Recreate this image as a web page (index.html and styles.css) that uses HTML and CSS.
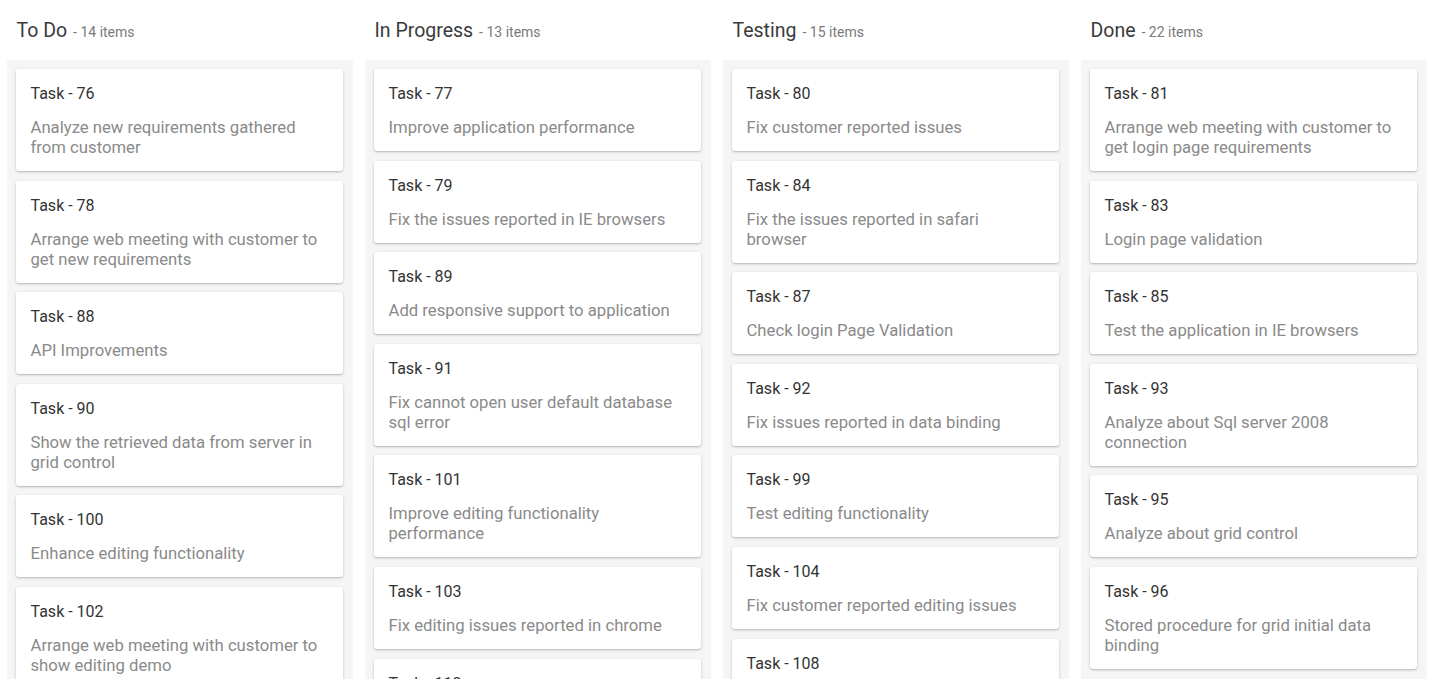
FILE: index.html
```html
<!DOCTYPE html>
<html lang="en">
<head>
<meta charset="utf-8">
<title>Kanban</title>
<link rel="stylesheet" href="styles.css">
</head>
<body>
<div class="board">
  <section class="column">
    <header class="col-head"><span class="col-title">To Do</span><span class="col-count">- 14 items</span></header>
    <div class="col-body">
      <div class="card"><div class="card-title">Task - 76</div><div class="card-desc">Analyze new requirements gathered from customer</div></div>
      <div class="card"><div class="card-title">Task - 78</div><div class="card-desc">Arrange web meeting with customer to get new requirements</div></div>
      <div class="card"><div class="card-title">Task - 88</div><div class="card-desc">API Improvements</div></div>
      <div class="card"><div class="card-title">Task - 90</div><div class="card-desc">Show the retrieved data from server in grid control</div></div>
      <div class="card"><div class="card-title">Task - 100</div><div class="card-desc">Enhance editing functionality</div></div>
      <div class="card"><div class="card-title">Task - 102</div><div class="card-desc">Arrange web meeting with customer to show editing demo</div></div>
    </div>
  </section>
  <section class="column">
    <header class="col-head"><span class="col-title">In Progress</span><span class="col-count">- 13 items</span></header>
    <div class="col-body">
      <div class="card"><div class="card-title">Task - 77</div><div class="card-desc">Improve application performance</div></div>
      <div class="card"><div class="card-title">Task - 79</div><div class="card-desc">Fix the issues reported in IE browsers</div></div>
      <div class="card"><div class="card-title">Task - 89</div><div class="card-desc">Add responsive support to application</div></div>
      <div class="card"><div class="card-title">Task - 91</div><div class="card-desc">Fix cannot open user default database sql error</div></div>
      <div class="card"><div class="card-title">Task - 101</div><div class="card-desc">Improve editing functionality performance</div></div>
      <div class="card"><div class="card-title">Task - 103</div><div class="card-desc">Fix editing issues reported in chrome</div></div>
      <div class="card"><div class="card-title">Task - 112</div><div class="card-desc">Improve performance of editing functionality</div></div>
    </div>
  </section>
  <section class="column">
    <header class="col-head"><span class="col-title">Testing</span><span class="col-count">- 15 items</span></header>
    <div class="col-body">
      <div class="card"><div class="card-title">Task - 80</div><div class="card-desc">Fix customer reported issues</div></div>
      <div class="card"><div class="card-title">Task - 84</div><div class="card-desc">Fix the issues reported in safari browser</div></div>
      <div class="card"><div class="card-title">Task - 87</div><div class="card-desc">Check login Page Validation</div></div>
      <div class="card"><div class="card-title">Task - 92</div><div class="card-desc">Fix issues reported in data binding</div></div>
      <div class="card"><div class="card-title">Task - 99</div><div class="card-desc">Test editing functionality</div></div>
      <div class="card"><div class="card-title">Task - 104</div><div class="card-desc">Fix customer reported editing issues</div></div>
      <div class="card"><div class="card-title">Task - 108</div><div class="card-desc">Fix the issues reported in chrome</div></div>
    </div>
  </section>
  <section class="column">
    <header class="col-head"><span class="col-title">Done</span><span class="col-count">- 22 items</span></header>
    <div class="col-body">
      <div class="card"><div class="card-title">Task - 81</div><div class="card-desc">Arrange web meeting with customer to get login page requirements</div></div>
      <div class="card"><div class="card-title">Task - 83</div><div class="card-desc">Login page validation</div></div>
      <div class="card"><div class="card-title">Task - 85</div><div class="card-desc">Test the application in IE browsers</div></div>
      <div class="card"><div class="card-title">Task - 93</div><div class="card-desc">Analyze about Sql server 2008 connection</div></div>
      <div class="card"><div class="card-title">Task - 95</div><div class="card-desc">Analyze about grid control</div></div>
      <div class="card"><div class="card-title">Task - 96</div><div class="card-desc">Stored procedure for grid initial data binding</div></div>
    </div>
  </section>
</div>
</body>
</html>
```
FILE: styles.css
```css
html, body {
  margin: 0;
  padding: 0;
  height: 100%;
  overflow: hidden;
  background: #ffffff;
  font-family: Roboto, "Liberation Sans", Arial, sans-serif;
}

.board {
  display: flex;
  gap: 12px;
  padding-left: 6.5px;
  align-items: flex-start;
}

.column {
  width: 346px;
  flex: 0 0 346px;
}

.col-head {
  height: 60px;
  box-sizing: border-box;
  padding: 19px 9px 0 10px;
  line-height: 24px;
  white-space: nowrap;
}

.col-title {
  font-size: 19.5px;
  color: #3a3a3a;
}

.col-count {
  margin-left: 6px;
  font-size: 14px;
  color: #7a7a7a;
}

.col-body {
  background: #f5f5f5;
  padding: 9px 10px 9px 9px;
  display: flex;
  flex-direction: column;
  gap: 9.6px;
  min-height: 800px;
}

.card {
  background: #ffffff;
  border-radius: 3px;
  box-shadow: 0 1px 3px rgba(0, 0, 0, 0.2), 0 1px 1px rgba(0, 0, 0, 0.08);
  padding: 15px 20px 13px 15px;
}

.card-title {
  font-size: 16px;
  line-height: 20px;
  color: #333333;
}

.card-desc {
  margin-top: 14px;
  font-size: 16.7px;
  line-height: 20px;
  color: #8a8a8a;
}
```
